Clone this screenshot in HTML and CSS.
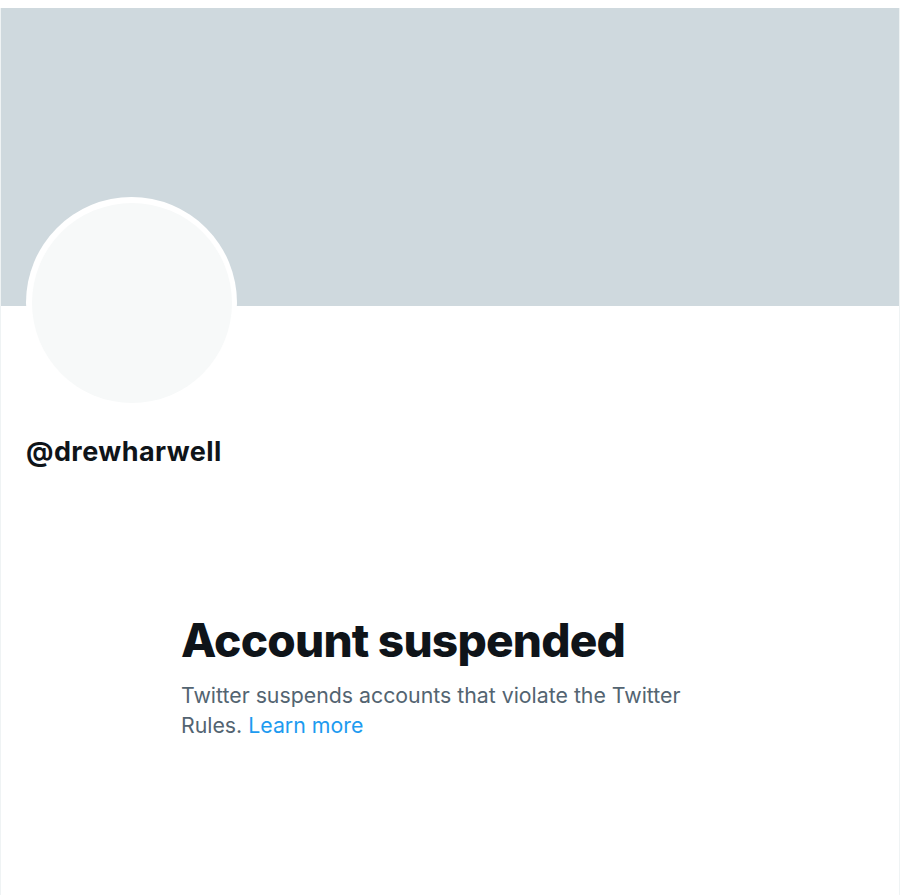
FILE: index.html
```html
<!DOCTYPE html>
<html lang="en">
<head>
<meta charset="utf-8">
<title>@drewharwell / Twitter</title>
<link rel="stylesheet" href="styles.css">
</head>
<body>
<main class="column">
  <div class="banner"></div>
  <div class="profile">
    <div class="avatar"><div class="avatar-inner"></div></div>
    <div class="handle">@drewharwell</div>
  </div>
  <section class="empty">
    <h1 class="empty-title">Account suspended</h1>
    <p class="empty-text">Twitter suspends accounts that violate the Twitter Rules. <a class="link" href="#">Learn more</a></p>
  </section>
</main>
</body>
</html>
```

FILE: styles.css
```css
html, body {
  margin: 0;
  padding: 0;
  background: #ffffff;
}
body {
  font-family: Inter, "Noto Sans", sans-serif;
  color: #0f1419;
  padding-top: 8px;
}
.column {
  width: 898px;
  min-height: 887px;
  border-left: 1px solid #eff3f4;
  border-right: 1px solid #eff3f4;
  display: flex;
  flex-direction: column;
}
.banner {
  height: 298px;
  background: #cfd9de;
}
.profile {
  padding: 0 25px;
  display: flex;
  flex-direction: column;
}
.avatar {
  width: 211px;
  height: 211px;
  margin-top: -109px;
  border-radius: 50%;
  background: #ffffff;
  padding: 5.5px;
  box-sizing: border-box;
}
.avatar-inner {
  width: 100%;
  height: 100%;
  border-radius: 50%;
  background: #f7f9f9;
}
.handle {
  margin-top: 28px;
  font-size: 27px;
  line-height: 32px;
  font-weight: 700;
  letter-spacing: 0.45px;
}
.empty {
  width: 538px;
  margin: 144px auto 0;
}
.empty-title {
  margin: 0;
  font-size: 46px;
  line-height: 56px;
  font-weight: 800;
  letter-spacing: -0.8px;
}
.empty-text {
  margin: 12px 0 0;
  font-size: 21.3px;
  line-height: 30px;
  color: #536471;
}
.link {
  color: #1d9bf0;
  text-decoration: none;
}
```
